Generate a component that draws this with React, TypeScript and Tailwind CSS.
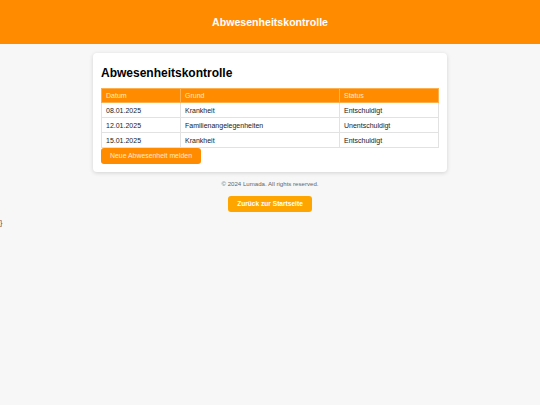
import React from "react";

const rows = [
  { d: "08.01.2025", g: "Krankheit", s: "Entschuldigt" },
  { d: "12.01.2025", g: "Familienangelegenheiten", s: "Unentschuldigt" },
  { d: "15.01.2025", g: "Krankheit", s: "Entschuldigt" },
];

export default function App() {
  return (
    <div className="min-h-[405px] bg-[#f7f7f7] text-[#222]" style={{ fontFamily: '"Liberation Sans", Arial, sans-serif' }}>
      <header className="h-[44px] bg-[#ff8c00] flex items-center justify-center">
        <h1 className="text-white font-bold text-[10.6px] leading-none">Abwesenheitskontrolle</h1>
      </header>
      <main className="w-[354px] mx-auto mt-[9px] bg-white rounded-[4px] shadow-[0_1px_4px_rgba(0,0,0,0.15)] px-[8px] pt-[13px] pb-[8px]">
        <h2 className="text-[12px] font-bold leading-[14px] text-black mb-[8px]">Abwesenheitskontrolle</h2>
        <table className="w-full border-collapse text-[7px] leading-[9px]">
          <thead>
            <tr className="bg-[#ff8c00] text-[#ffe9cc]">
              <th className="w-[79px] h-[14px] text-left font-normal px-[4px] border border-[#ffb04d]">Datum</th>
              <th className="w-[159px] text-left font-normal px-[4px] border border-[#ffb04d]">Grund</th>
              <th className="text-left font-normal px-[4px] border border-[#ffb04d]">Status</th>
            </tr>
          </thead>
          <tbody>
            {rows.map((r) => (
              <tr key={r.d}>
                <td className="h-[15px] px-[4px] border border-[#e2e2e2]">{r.d}</td>
                <td className="px-[4px] border border-[#e2e2e2]">{r.g}</td>
                <td className="px-[4px] border border-[#e2e2e2]">{r.s}</td>
              </tr>
            ))}
          </tbody>
        </table>
        <button className="block h-[16px] px-[9px] bg-[#ff8c00] text-[#ffe9cc] text-[6.9px] rounded-[3px] leading-none">
          Neue Abwesenheit melden
        </button>
      </main>
      <footer className="flex flex-col items-center mt-[8px]">
        <p className="text-[6.1px] text-[#666] leading-[8px]">© 2024 Lumada. All rights reserved.</p>
        <button className="block mt-[8px] h-[16px] w-[84px] bg-[#ffa500] text-white font-bold text-[6.6px] rounded-[3px] leading-none">
          Zurück zur Startseite
        </button>
      </footer>
      <div className="text-[7px] leading-[9px] text-[#444] mt-[6px]">{"}"}</div>
    </div>
  );
}
